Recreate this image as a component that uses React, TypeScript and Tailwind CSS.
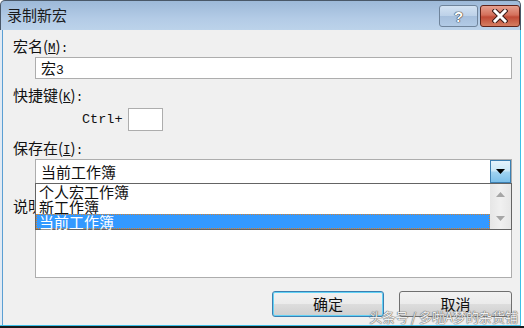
import React from "react";

const L = ({ children }: { children: React.ReactNode }) => (
  <span className="font-['Liberation_Mono'] text-[12.5px] leading-none">{children}</span>
);

const Label = ({ children, className = "" }: { children: React.ReactNode; className?: string }) => (
  <div className={"h-[16px] leading-[16px] whitespace-nowrap " + className}>
    <span className="leading-none">{children}</span>
  </div>
);

export default function App() {
  return (
    <div className="w-[524px] h-[328px] bg-white flex flex-col overflow-hidden font-['Noto_Sans_CJK_SC',sans-serif] text-[15px] text-[#111]">
      <div className="flex h-[326px] shrink-0">
        <div className="w-[521px] flex flex-col">
          {/* Title bar */}
          <div className="h-[30px] shrink-0 flex items-start border-t border-l border-r border-[#4a5868] rounded-t-[5px] bg-[linear-gradient(#9db9d8,#b3cbe6_60%,#bcd3ea)]">
            <div className="mt-[4px] pl-[6px] h-[20px] leading-[20px] text-[15px] text-[#1a1a1a]">录制新宏</div>
            <div className="ml-auto mt-[4px] flex gap-[2px]">
              <div className="w-[39px] h-[22px] rounded-[3px] border border-[#6f849b] bg-[linear-gradient(#d3e2f2,#bcd1e8_50%,#a6bfdc_50%,#b2cbe6)] flex items-center justify-center">
                <span className="font-['Liberation_Sans'] font-bold text-[15px] leading-none text-white [text-shadow:0_0_1px_#333,0_0_1px_#333,0_0_1px_#333]">?</span>
              </div>
              <div className="w-[40px] h-[22px] rounded-[3px] border border-[#5e2219] bg-[linear-gradient(#e6a08f,#d4705b_45%,#c04a36_55%,#d57e62)] flex items-center justify-center">
                <svg width="16" height="14" viewBox="0 0 16 14">
                  <path d="M3 2 L13 12 M13 2 L3 12" stroke="#3a1a16" strokeWidth="5" strokeLinecap="square" />
                  <path d="M3 2 L13 12 M13 2 L3 12" stroke="#ffffff" strokeWidth="3" strokeLinecap="square" />
                </svg>
              </div>
            </div>
          </div>
          {/* Body */}
          <div className="flex h-[295px] shrink-0 border-r border-[#3cc0e8]">
            <div className="w-[2px] bg-[#e1eaf4]" />
            <div className="w-px bg-[#5b9fd3]" />
            <div className="flex-1 bg-[#f0f0f0] flex flex-col pl-[10px] pt-[8px] relative">
              <Label>宏名(<L><u>M</u></L>)<L>:</L></Label>
              <div className="mt-[3px] ml-[22px] w-[477px] h-[22px] shrink-0 bg-white border border-[#adadad] flex items-center pl-[5px]">
                <span className="leading-[16px] h-[16px] whitespace-nowrap">宏<span className="font-['Liberation_Mono'] text-[13px] leading-none">3</span></span>
              </div>
              <Label className="mt-[8px]">快捷键(<L><u>K</u></L>)<L>:</L></Label>
              <div className="mt-[5px] ml-[69px] flex items-center h-[23px] shrink-0">
                <span className="font-['Liberation_Mono'] text-[13.5px] leading-[16px]">Ctrl+</span>
                <div className="ml-[5px] w-[35px] h-[23px] bg-white border border-[#adadad]" />
              </div>
              <Label className="mt-[9px]">保存在(<L><u>I</u></L>)<L>:</L></Label>
              <div className="mt-[3px] ml-[22px] w-[477px] h-[24px] shrink-0 relative bg-white border-t border-l border-r border-[#adadad] z-10">
                <div className="h-[23px] flex items-center pl-[5px] leading-[16px]">当前工作簿</div>
                <div className="absolute right-0 top-0 w-[21px] h-[23px] border border-[#3c7fb1] bg-[linear-gradient(#e4f3fc,#cde9f8_45%,#9fd2f0_55%,#7cc0ea)] flex items-center justify-center">
                  <svg width="9" height="5" viewBox="0 0 9 5">
                    <path d="M0 0 H9 L4.5 5 Z" fill="#000" />
                  </svg>
                </div>
                <div className="absolute left-[-1px] top-[23px] w-[477px] h-[47px] bg-white border border-[#646464] flex">
                  <div className="flex-1 flex flex-col">
                    <div className="h-[15px] leading-[15px] pl-[3px] whitespace-nowrap">个人宏工作簿</div>
                    <div className="h-[15px] leading-[15px] pl-[3px] whitespace-nowrap">新工作簿</div>
                    <div className="h-[15px] leading-[13px] pl-[2px] bg-[#3399ff] text-white border border-dotted border-[#d9822b] whitespace-nowrap">当前工作簿</div>
                  </div>
                  <div className="w-[21px] h-[45px] bg-[linear-gradient(90deg,#e6e6e6,#f0f0f0_50%,#e6e6e6)] flex flex-col items-center justify-between py-[8px]">
                    <svg width="9" height="5" viewBox="0 0 9 5">
                      <path d="M0 5 H9 L4.5 0 Z" fill="#a6a6a6" />
                    </svg>
                    <svg width="9" height="5" viewBox="0 0 9 5">
                      <path d="M0 0 H9 L4.5 5 Z" fill="#a6a6a6" />
                    </svg>
                  </div>
                </div>
              </div>
              <Label className="mt-[15px]">说明(<L><u>D</u></L>)<L>:</L></Label>
              <div className="mt-[3px] ml-[22px] w-[477px] h-[61px] shrink-0 bg-white border border-[#adadad]" />
              <div className="mt-[13px] flex justify-end pr-[8px] gap-[15px] shrink-0">
                <div className="w-[112px] h-[26px] rounded-[3px] border border-[#3c7fb1] shadow-[inset_0_0_0_1px_#62d2f6] bg-[linear-gradient(#f2f2f2,#ebebeb_50%,#dddddd_50%,#cfcfcf)] flex items-center justify-center leading-[16px]">确定</div>
                <div className="w-[113px] h-[26px] rounded-[3px] border border-[#707070] bg-[linear-gradient(#f2f2f2,#ebebeb_50%,#dddddd_50%,#cfcfcf)] flex items-center justify-center leading-[16px]">取消</div>
              </div>
              <div className="absolute right-[2px] bottom-[0px] text-[13px] leading-[16px] text-white/90 [text-shadow:0_0_1px_#666,0_0_1px_#666,0_0_1px_#666] z-20 whitespace-nowrap">
                头条号 / 多啦A梦的杂货铺
              </div>
            </div>
          </div>
          <div className="h-px shrink-0 bg-[#3cc0e8]" />
        </div>
        <div className="w-[3px] bg-white" />
      </div>
      <div className="h-[2px] shrink-0 bg-[#1a1a1a]" />
    </div>
  );
}
